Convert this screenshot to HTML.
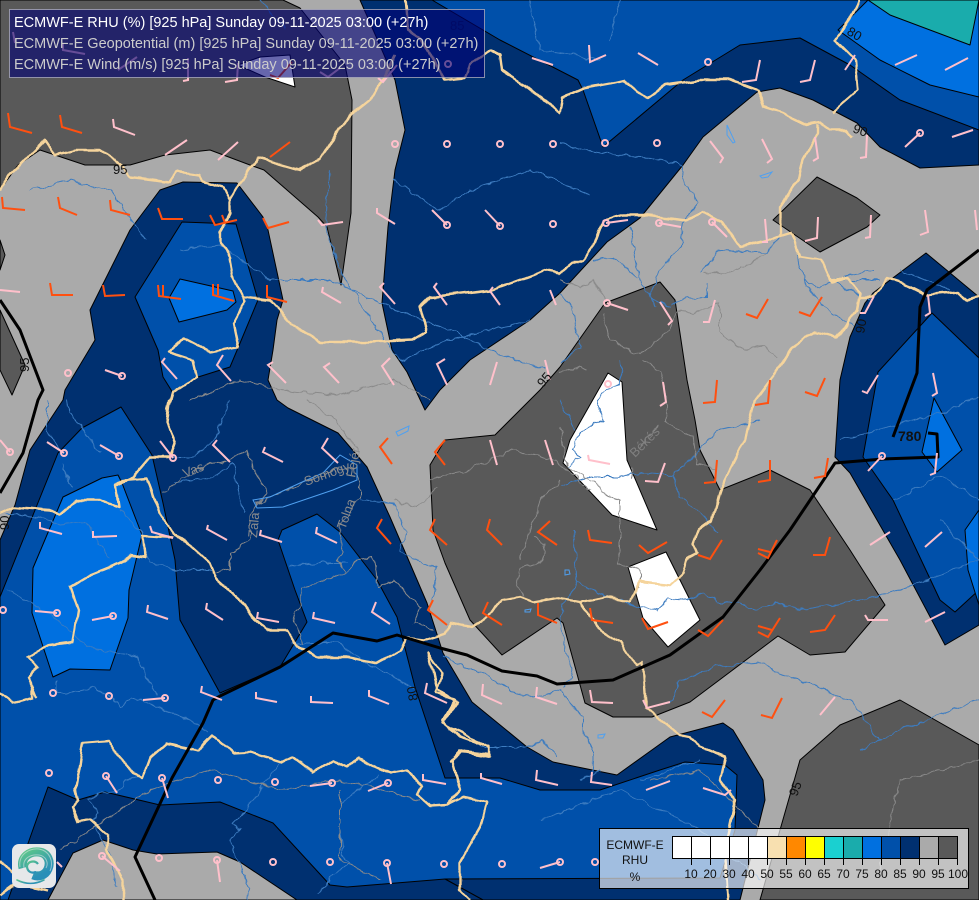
<!DOCTYPE html>
<html lang="en"><head><meta charset="utf-8"><title>ECMWF-E RHU 925 hPa</title>
<style>
html,body{margin:0;padding:0;background:#aaa;width:979px;height:900px;overflow:hidden}
svg{display:block;font-family:"Liberation Sans",sans-serif}
.c{stroke:#000;stroke-width:1;stroke-linejoin:round}
</style></head><body>
<svg width="979" height="900" viewBox="0 0 979 900" xmlns="http://www.w3.org/2000/svg">
<defs>
<filter id="w" filterUnits="userSpaceOnUse" x="0" y="0" width="979" height="900" color-interpolation-filters="sRGB"><feTurbulence type="fractalNoise" baseFrequency="0.1" numOctaves="2" seed="4"/><feDisplacementMap in="SourceGraphic" scale="7" xChannelSelector="R" yChannelSelector="G"/></filter>
<filter id="t" filterUnits="userSpaceOnUse" x="0" y="0" width="979" height="900" color-interpolation-filters="sRGB"><feTurbulence type="fractalNoise" baseFrequency="0.07" numOctaves="1" seed="9"/><feDisplacementMap in="SourceGraphic" scale="6" xChannelSelector="R" yChannelSelector="G"/></filter>
<linearGradient id="g" x1="0" y1="0" x2="0.6" y2="1"><stop offset="0" stop-color="#5cc68a"/><stop offset="1" stop-color="#2a8fb8"/></linearGradient>
</defs>
<rect width="979" height="900" fill="#aaa"/>

<!-- top navy & blues -->
<path class="c" fill="#003070" d="M360 0L395 80L405 130L395 170L388 227L382 303L392 350L407 372L425 410L440 390L470 360L530 320L560 293L607 242L640 218L683 165L703 137L757 92L780 88L813 100L857 123L880 147L920 168L979 165L979 0Z"/>
<path class="c" fill="#0050aa" d="M432 0L500 40L578 80L583 90L603 147L683 80L740 45L800 38L850 65L900 100L979 130L979 0Z"/>
<path class="c" fill="#0070e0" d="M868 0L838 30L880 60L930 85L979 97L979 0Z"/>
<path class="c" fill="#1aacac" d="M868 0L890 15L970 45L979 0Z"/>

<!-- top-left dark grey -->
<path class="c" fill="#595959" d="M0 0L283 0L300 8L345 65L352 100L351 213L341 285L327 227L318 217L264 170L250 165L210 150L165 155L130 165L85 165L40 150L18 165L0 190Z"/>
<path class="c" fill="#fff" d="M238 65L260 57L290 55L295 87L265 77Z"/>

<!-- left big blue area -->
<path class="c" fill="#003070" d="M90 310L130 230L160 190L183 182L237 183L263 217L268 230L283 300L277 320L273 350L268 380L277 400L288 408L338 433L367 467L390 517L427 603L443 653L472 702L527 747L553 762L617 775L670 737L723 723L733 730L763 780L765 800L745 880L740 900L0 900L0 540L15 505L30 450L63 400L65 390L95 340Z"/>
<path class="c" fill="#0050aa" d="M0 597L58 453L82 428L121 407L152 455L163 503L175 560L180 620L220 693L280 667L307 622L295 590L278 540L282 530L317 514L340 532L377 580L397 617L415 687L445 778L500 778L540 790L600 790L660 770L685 762L725 765L737 775L735 830L720 878L445 879L483 900L0 900Z"/>
<path class="c" fill="#0050aa" d="M182 222L236 224L258 300L238 348L230 367L195 378L173 393L163 377L158 350L135 297Z"/>
<path class="c" fill="#0070e0" d="M180 279L233 291L236 302L227 310L179 322L169 298Z"/>
<path class="c" fill="#0070e0" d="M118 475L102 478L63 497L33 568L32 613L53 677L70 669L110 670L128 618L129 590L142 535L122 483Z"/>
<!-- bottom navy strip & grey -->
<path class="c" fill="#003070" d="M48 787L78 800L105 792L160 805L220 802L273 823L330 885L347 887L445 879L483 900L8 900Z"/>
<path class="c" fill="#aaa" d="M48 900L73 853L103 840L133 850L157 854L217 852L240 862L297 900Z"/>
<path class="c" fill="#595959" d="M0 310L25 365L12 395L0 370Z"/>
<path class="c" fill="#595959" d="M0 240L5 255L0 270Z"/>

<!-- right blues -->
<path class="c" fill="#003070" d="M926 253L979 297L979 625L945 645L900 560L850 473L835 457L840 380L850 337L865 303L873 293Z"/>
<path class="c" fill="#0050aa" d="M932 313L979 358L979 590L955 612L940 600L893 500L863 457L878 372Z"/>
<path class="c" fill="#0070e0" d="M934 398L962 450L937 472L922 452Z"/>
<path class="c" fill="#0070e0" d="M979 510L965 530L968 570L979 605Z"/>

<!-- central dark grey -->
<path class="c" fill="#595959" d="M605 303L660 282L675 300L687 380L695 420L700 450L720 490L770 470L810 490L850 550L885 605L845 652L810 655L778 636L690 702L652 717L613 717L585 703L563 623L557 618L502 655L470 620L445 563L433 530L430 465L445 440L495 435L540 390L560 367Z"/>
<path class="c" fill="#fff" d="M608 373L622 382L627 460L657 530L612 515L563 463L570 440Z"/>
<path class="c" fill="#fff" d="M628 567L666 552L700 620L668 647L643 618Z"/>
<path class="c" fill="#595959" d="M817 177L857 198L880 215L867 227L820 252L773 220Z"/>
<path class="c" fill="#595959" d="M900 700L979 745L979 900L760 900L780 830L800 760L840 725Z"/>

<!-- rivers -->
<g fill="none" stroke="#3d7cc0" stroke-width="1" filter="url(#w)">
<path d="M560 143L570 147L603 153L627 157L653 158L683 165L682 170L685 183L697 202L683 223L680 247L660 270L650 297L672 307M630 227L640 280L657 307M593 260L613 258L637 277M700 273L720 250L767 252L780 237M707 283L707 297L687 298L672 305M793 240L803 280L823 307L855 327M803 280L820 288L837 280L880 280M560 293L573 307L580 347L560 363"/>
<path d="M47 400L47 430L60 450M68 400L70 413L93 443L100 453M62 463L72 487M7 513L40 517L60 525L87 523L100 547L110 557M120 510L140 530L150 563L177 570L213 570M7 590L30 603L57 620L87 647L113 652L137 657L150 683L157 697M233 463L243 513M173 483L213 477L233 463M157 457L190 457L213 443L230 400M290 567L320 563L347 563M360 500L393 503L407 533L400 550L423 563L437 567L433 600M293 643L337 643L367 663L413 687"/>
<path d="M57 680L57 693L73 693L93 688L113 697L120 707L133 697L157 707L190 720L207 733M87 800L105 792L117 793L127 780L137 777M87 800L98 813L93 823L113 860L117 887M280 763L243 813L233 823L240 830L230 840L237 860L250 887L247 900M300 762L310 770M380 775L340 803L340 830L343 857L350 863L330 877L328 885L317 893"/>
<path d="M443 655L460 665L490 677L510 690L533 697L560 690L570 703L583 717L583 730L593 747L593 760L592 775M563 687L573 677L560 623L563 605L577 583L573 530M577 583L600 593L640 607L657 610L667 598L687 600L703 593L717 602L737 602L753 610L780 603L800 610L860 600L900 590L979 560M670 703L680 680L717 667L763 662L773 670L800 680L850 700L880 740M472 740L483 747L527 747L543 740L557 757"/>
<path d="M620 360L622 373L618 385L610 388L597 400L603 420L592 423L577 437L573 450L580 457L567 467M560 400L577 430M560 485L592 477L620 477L640 473L673 475L693 457L717 430L760 420M673 475L680 497L707 520L717 533"/>
<path d="M180 250L220 245L270 280L330 280L395 310L450 330L490 350L545 370M395 180L440 210L470 190L530 170L590 195M400 360L450 340L530 320M530 0L540 50L600 60M620 0L610 40M330 170L325 230L345 280L385 340L400 360M260 0L285 30M30 190L70 180L110 190L145 240M840 440L950 410L979 395M860 750L900 730L979 700M540 820L620 790L700 830L760 880M830 280L870 300M640 780L700 760M580 780L600 770"/>
<path d="M830 280L875 270M900 270L950 290M895 500L940 475L979 500M940 520L979 560"/>
</g>
<!-- regional grey lines -->
<g fill="none" stroke="#8a8a8a" stroke-width="1" filter="url(#w)">
<path d="M230 460L247 450L253 467L267 493L257 503L250 517L250 540L230 555L230 570L213 573M230 460L210 463L183 478L163 493M257 503L333 470L353 468L360 483L360 497L340 527L343 553L337 560L347 573L303 587L300 607L293 617L303 643M347 573L357 560L373 557L378 587L393 580L420 607L413 623L432 630M307 400L333 417L360 453M393 500L417 507L437 487"/>
<path d="M280 390L340 395L395 380L430 400M190 400L240 380L280 390"/>
<path d="M560 280L580 288L593 280L607 300M603 313L610 340L640 355L670 330L677 310L693 313L720 303L720 333L743 350L763 347L777 357M703 273L733 272L767 253"/>
<path d="M517 583L523 597M517 583L520 568L543 560L545 543L533 538M620 530L620 550L617 562L640 570L640 587M560 427L567 467L600 487L603 493L620 500L620 533M587 370L577 367L560 373M643 360L660 373L667 393L665 423L693 437L697 463L717 470M632 467L633 480M640 445L660 425"/>
<path d="M430 480L470 470L510 450L555 460L590 490M520 560L540 500L560 480"/>
<path d="M60 850L150 790L210 770L280 790L340 780L420 800M340 790L340 860L380 880M880 870L900 780L979 760M650 780L700 770L760 830"/>
</g>
<!-- lakes -->
<g fill="none" stroke="#4fa0f0" stroke-width="1">
<path d="M253 500L270 497L300 483L323 473L340 455L357 465L357 480L333 490L283 507L257 508Z"/>
<path d="M727 125L735 142L733 143L727 135ZM760 176L772 172L768 177L762 178ZM565 570L569 570L570 574L565 575ZM396 432L409 426L408 431L398 436ZM525 610L531 609L530 612L525 612ZM598 735L605 734L603 738L598 738Z"/>
</g>
<!-- tan borders -->
<g fill="none" stroke="#f5d49c" stroke-width="2.4" stroke-linejoin="round" filter="url(#t)">
<path d="M0 190L10 175L25 160L45 140L55 155L75 150L100 150L115 160L130 177L170 182L177 172L200 175L203 182L223 188L230 200L248 170L258 158L300 170L320 160L345 120L370 100L385 75L395 55M405 0L408 30L420 37L445 80L465 78L470 65L490 50L500 55L502 70L525 85L560 113L563 97L583 88L610 83L623 80L637 92L648 97L665 85L700 80L730 80L757 90L763 107L783 113L807 125L820 123L830 130L847 130L853 137M860 0L850 20L835 40L855 60L858 90L833 112"/>
<path d="M818 125L818 133L803 160L798 180L780 207L780 235L790 232L793 237L800 257L820 260L832 282L847 278L860 293L857 310L847 325L837 337L815 332L793 347L780 367L770 380L755 400L745 440L720 490L712 520L698 530L693 543L697 553L687 558L683 573L670 585L640 582L630 602L608 597L580 602L557 598L533 602L520 597L502 600L493 613L472 627L450 623L445 633L423 640L407 638L400 650L377 663L347 657L317 657L297 647L287 630L267 630L255 620L240 600L217 580L210 563L190 545L173 533L160 513L155 500L147 478L123 480L115 485L133 477L150 457L170 457L175 443L167 423L170 400L168 410L173 393L197 377L193 360L168 352L183 338L210 352L238 347L233 323L240 310L245 302L243 297L233 277L230 257L220 242L220 233L230 213L230 200"/>
<path d="M780 235L767 240L740 247L723 223L703 212L687 220L643 215L623 215L603 220L593 247L583 262L573 262L560 273L545 270L490 290L450 295L430 297L420 307L427 332L413 340L370 342L320 342L293 325L270 300L243 297"/>
<path d="M115 485L118 507L100 500L77 500L60 515L50 510L13 507L0 513M173 537L143 535L145 557L132 555L120 563L90 575L70 587L78 610L73 642L50 645L28 657L38 668L28 677L37 697L33 687L33 698L13 703L0 693"/>
<path d="M80 763L83 743L108 741L117 755L133 773L143 777L150 758L167 743L197 750L212 735L233 753L250 752L283 762L293 757L313 772L333 760L347 767L358 758L390 773L408 770L422 787L418 795L430 806L447 805L463 797L487 802L480 827L460 862L460 890L470 900M80 763L75 790L78 800L72 807L78 822L90 820L107 835L107 850L123 880L123 900M447 805L460 790L452 760L460 752L490 755L490 748L457 730L443 722L457 702L437 690L428 653L442 673L435 693L455 700L443 720L460 737L490 747L490 757L462 752L450 762L452 760"/>
<path d="M580 602L597 627L620 642L630 657L638 665L643 662L645 693L645 707L680 735L690 737L700 747L725 757L720 780L735 800L725 850L728 900M0 860L20 880L0 895M25 885L47 890M830 280L847 278M860 297L873 297L888 278L903 283L927 295L957 292L967 300L979 297"/>
</g>

<!-- black 780 contour -->
<g fill="none" stroke="#000" stroke-width="3" stroke-linejoin="round">
<path d="M155 900L135 857L172 778L203 723L213 700L220 696L280 667L333 633L377 641L397 635L440 648L467 655L502 671L537 676L557 684L613 680L670 655L723 617L760 570L790 530L835 463L883 459L938 457L937 434L928 433"/>
<path d="M979 250L927 290L920 307L917 373L893 437M0 300L20 330L43 390L38 400L23 453L0 493"/>
</g>

<!-- barbs -->
<path fill="none" stroke="#ffc0cb" stroke-width="2" d="M47 442L64 453M100 445L119 456M160 441L173 458M217 440L213 445L230 462M265 447L263 452L283 462M328 438L322 448L338 463M40 522L40 528L62 534M93 531L93 537L117 536M150 526L152 532L173 538M208 525L207 529L227 540M261 530L260 535L282 542M317 527L316 533L337 543M35 611L57 613M92 620L113 616M148 605L147 612L168 619M207 603L206 609L223 620M258 612L257 618L279 622M314 612L313 618L335 623M376 602L372 612L390 624M427 683L425 693L447 703M483 684L482 695L502 704M537 687L536 697L557 704M590 690L592 702L613 703M643 700L647 708L670 702M202 686L201 692L222 700M256 692L256 698L277 702M311 696L311 702L333 703M369 690L369 696L389 704M143 700L165 698M106 776L117 793M162 778L168 798M332 783L310 786M388 783L368 791M423 774L423 780L446 784M481 773L481 778L502 784M217 860L220 882M387 863L391 884M102 856L120 871M57 862L62 867M540 868L560 862M537 770L536 780L558 785M592 772L591 782L612 785M646 790L670 781M703 788L725 795L731 790M710 141L723 158L720 163M762 139L772 159L767 163M815 137L818 158L813 161M867 135L866 157L860 158M606 223L628 220M659 223L681 227M712 222L727 237M765 219L767 242L762 242M818 217L817 238L805 241M871 215L870 237L865 238M607 303L628 310M660 302L672 321L668 325M715 300L709 322L703 322M874 296L865 313L860 313M928 295L930 313L925 316M933 373L937 393L932 396M878 375L867 393L862 391M882 456L868 471M937 453L935 473L930 475M318 220L322 225L343 222M377 208L377 213L395 224M447 225L432 210M500 226L485 210M323 287L322 292L341 303M384 283L380 287L395 304M437 283L434 287L447 305M493 287L490 291L500 305M550 290L556 305M165 358L162 362L177 379M223 355L217 365L231 381M273 362L268 365L286 383M330 363L324 367L339 383M390 358L382 366L394 385M445 359L437 364L447 385M497 362L490 385M545 360L550 380M663 382L666 402L660 406M588 455L589 460L610 464M665 463L658 482L645 481M490 440L497 465M545 440L553 465M0 440L10 452M870 545L890 532M925 547L942 532M865 615L868 620L888 620M925 622L945 612M820 715L835 697M589 45L590 62L606 55M532 58L553 65M638 53L658 65M760 60L756 80L742 82M815 60L810 80L800 82M855 55L845 70M917 55L895 65M968 58L945 70M905 147L920 133M973 130L952 137M113 119L114 127L135 135M165 155L187 140M218 160L238 142M925 210L928 232L920 235M975 210L977 230M0 290L20 292M105 370L122 376M13 32L15 43M63 43L63 50L85 54M118 70L137 57M188 58L188 80L183 81M238 63L237 80L225 82M320 72L328 77L340 68M378 78L383 82L397 65"/>
<path fill="none" stroke="#ff5010" stroke-width="2" d="M8 113L10 127L32 133M60 115L62 127L82 133M270 157L290 142M2 197L3 208L25 210M58 197L60 208L77 215M110 200L111 210L130 215M158 208L162 219L183 219M210 215L215 225L237 220M222 215L225 223M263 218L268 228L289 222M50 283L52 295L73 295M103 285L105 296L125 295M158 285L159 296L181 299M163 285L163 296M213 284L213 295L234 301M218 284L218 295M267 285L267 297L287 302M388 438L380 447L392 464M445 440L435 452L445 465M382 519L377 528L391 544M435 519L430 530L447 545M490 519L487 530L502 545M550 521L538 532L557 545M588 530L590 540L612 543M639 545L648 553L667 542M698 555L710 559L722 540M758 553L768 558L777 540M758 549L770 552M813 555L825 555L830 537M433 600L428 610L447 625M488 602L483 613L502 625M538 603L538 615L557 623M590 608L592 620L613 623M642 618L648 629L668 622M698 630L708 636L723 620M758 632L768 637L780 618M758 626L772 630M810 632L825 630L835 615M702 712L712 717L725 700M761 715L772 718L782 698M717 380L715 402L703 403M770 380L768 403L755 405M825 378L817 396L805 392M768 299L757 318L746 314M822 297L810 316L799 312M717 460L715 482L704 483M770 460L770 480L758 482M828 458L825 476L814 478M270 75L278 78L292 62"/>
<g fill="none" stroke="#ffc0cb" stroke-width="2">
<circle cx="447" cy="144" r="3"/><circle cx="500" cy="144" r="3"/><circle cx="553" cy="144" r="3"/><circle cx="605" cy="143" r="3"/><circle cx="657" cy="143" r="3"/><circle cx="395" cy="144" r="3"/><circle cx="920" cy="133" r="3"/><circle cx="708" cy="62" r="3"/><circle cx="448" cy="64" r="3"/><circle cx="447" cy="225" r="3"/><circle cx="500" cy="226" r="3"/><circle cx="553" cy="224" r="3"/><circle cx="606" cy="223" r="3"/><circle cx="659" cy="223" r="3"/><circle cx="712" cy="222" r="3"/><circle cx="607" cy="303" r="3"/><circle cx="68" cy="373" r="3"/><circle cx="122" cy="376" r="3"/><circle cx="608" cy="384" r="3"/><circle cx="882" cy="456" r="3"/><circle cx="10" cy="452" r="3"/><circle cx="64" cy="453" r="3"/><circle cx="119" cy="456" r="3"/><circle cx="173" cy="458" r="3"/><circle cx="3" cy="610" r="3"/><circle cx="57" cy="613" r="3"/><circle cx="113" cy="616" r="3"/><circle cx="53" cy="693" r="3"/><circle cx="109" cy="696" r="3"/><circle cx="165" cy="698" r="3"/><circle cx="49" cy="773" r="3"/><circle cx="106" cy="776" r="3"/><circle cx="162" cy="778" r="3"/><circle cx="218" cy="780" r="3"/><circle cx="275" cy="782" r="3"/><circle cx="332" cy="783" r="3"/><circle cx="388" cy="783" r="3"/><circle cx="102" cy="856" r="3"/><circle cx="159" cy="858" r="3"/><circle cx="217" cy="860" r="3"/><circle cx="273" cy="862" r="3"/><circle cx="330" cy="862" r="3"/><circle cx="387" cy="863" r="3"/><circle cx="444" cy="864" r="3"/><circle cx="502" cy="864" r="3"/><circle cx="560" cy="862" r="3"/><circle cx="595" cy="862" r="3"/>
</g>

<!-- region labels -->
<g font-size="13" fill="#8c8c8c">
<text transform="translate(185,478) rotate(-22)">Vas</text>
<text transform="translate(306,486) rotate(-20)">Somogy</text>
<text transform="translate(355,478) rotate(-80)">Fejér</text>
<text transform="translate(257,538) rotate(-85)">Zala</text>
<text transform="translate(345,530) rotate(-70)">Tolna</text>
<text transform="translate(635,458) rotate(-45)" fill="#808080">Békés</text>
</g>
<!-- contour labels -->
<g font-size="13" fill="#111">
<text x="113" y="174">95</text>
<text x="450" y="30" fill="#001a50">85</text>
<text transform="translate(846,34) rotate(30)">80</text>
<text transform="translate(852,132) rotate(20)">90</text>
<text transform="translate(543,388) rotate(-50)">95</text>
<text transform="translate(29,372) rotate(-90)">95</text>
<text transform="translate(864,334) rotate(-80)">90</text>
<text transform="translate(797,797) rotate(-70)">95</text>
<text transform="translate(418,700) rotate(-100)">80</text>
<text transform="translate(9,530) rotate(-90)">90</text>
<text x="898" y="441" font-weight="bold" font-size="14">780</text>
</g>

<!-- title panel -->
<rect x="9.5" y="9.5" width="475" height="68" fill="#000075" fill-opacity=".6" stroke="#aab" stroke-opacity=".8"/>
<g font-size="14.5">
<text x="14" y="27" fill="#fff">ECMWF-E RHU (%) [925 hPa] Sunday 09-11-2025 03:00 (+27h)</text>
<text x="14" y="48" fill="#ccc">ECMWF-E Geopotential (m) [925 hPa] Sunday 09-11-2025 03:00 (+27h)</text>
<text x="14" y="69" fill="#ccc">ECMWF-E Wind (m/s) [925 hPa] Sunday 09-11-2025 03:00 (+27h)</text>
</g>

<!-- legend -->
<rect x="599.5" y="828.5" width="369" height="60" fill="#fff" fill-opacity=".63" stroke="#000"/>
<g stroke="#000" stroke-width="1">
<rect x="672.5" y="836.5" width="19" height="22" fill="#fff"/>
<rect x="691.5" y="836.5" width="19" height="22" fill="#fff"/>
<rect x="710.5" y="836.5" width="19" height="22" fill="#fff"/>
<rect x="729.5" y="836.5" width="19" height="22" fill="#fff"/>
<rect x="748.5" y="836.5" width="19" height="22" fill="#fff"/>
<rect x="767.5" y="836.5" width="19" height="22" fill="#f8e0b0"/>
<rect x="786.5" y="836.5" width="19" height="22" fill="#ff8800"/>
<rect x="805.5" y="836.5" width="19" height="22" fill="#ffff00"/>
<rect x="824.5" y="836.5" width="19" height="22" fill="#1ad0d0"/>
<rect x="843.5" y="836.5" width="19" height="22" fill="#1aacac"/>
<rect x="862.5" y="836.5" width="19" height="22" fill="#0070e0"/>
<rect x="881.5" y="836.5" width="19" height="22" fill="#0050aa"/>
<rect x="900.5" y="836.5" width="19" height="22" fill="#003070"/>
<rect x="919.5" y="836.5" width="19" height="22" fill="#aaa"/>
<rect x="938.5" y="836.5" width="19" height="22" fill="#595959"/>
<path fill="none" d="M691.5 858V865M710.5 858V865M729.5 858V865M748.5 858V865M767.5 858V865M786.5 858V865M805.5 858V865M824.5 858V865M843.5 858V865M862.5 858V865M881.5 858V865M900.5 858V865M919.5 858V865M938.5 858V865M957.5 858V865"/>
</g>
<g font-size="12" fill="#111" text-anchor="middle">
<text x="635" y="849">ECMWF-E</text>
<text x="635" y="864">RHU</text>
<text x="635" y="881">%</text>
<text x="691" y="878">10</text><text x="710" y="878">20</text><text x="729" y="878">30</text><text x="748" y="878">40</text><text x="767" y="878">50</text><text x="786" y="878">55</text><text x="805" y="878">60</text><text x="824" y="878">65</text><text x="843" y="878">70</text><text x="862" y="878">75</text><text x="881" y="878">80</text><text x="900" y="878">85</text><text x="919" y="878">90</text><text x="938" y="878">95</text><text x="958" y="878">100</text>
</g>

<!-- logo -->
<rect x="12" y="844" width="44" height="44" rx="7" fill="#e6e8ea"/>
<g fill="none" stroke="url(#g)">
<path stroke-width="9" d="M23 868C20 857 30 851 39 852C48 853 51 862 48 869C45 876 38 877 33 875"/>
<path stroke-width="1" stroke="#e6e8ea" stroke-opacity=".55" d="M20 867C18 854 30 848 39 849C50 851 54 862 50 871M24 868C22 858 31 854 39 855C46 856 49 863 46 868"/>
<path stroke-width="2.2" d="M36 872C31 874 27 871 27 866C28 861 35 860 38 864"/>
<path stroke-width="1.6" stroke-linecap="round" d="M17 880C25 884 34 885 44 880"/>
</g>
</svg>
</body></html>
